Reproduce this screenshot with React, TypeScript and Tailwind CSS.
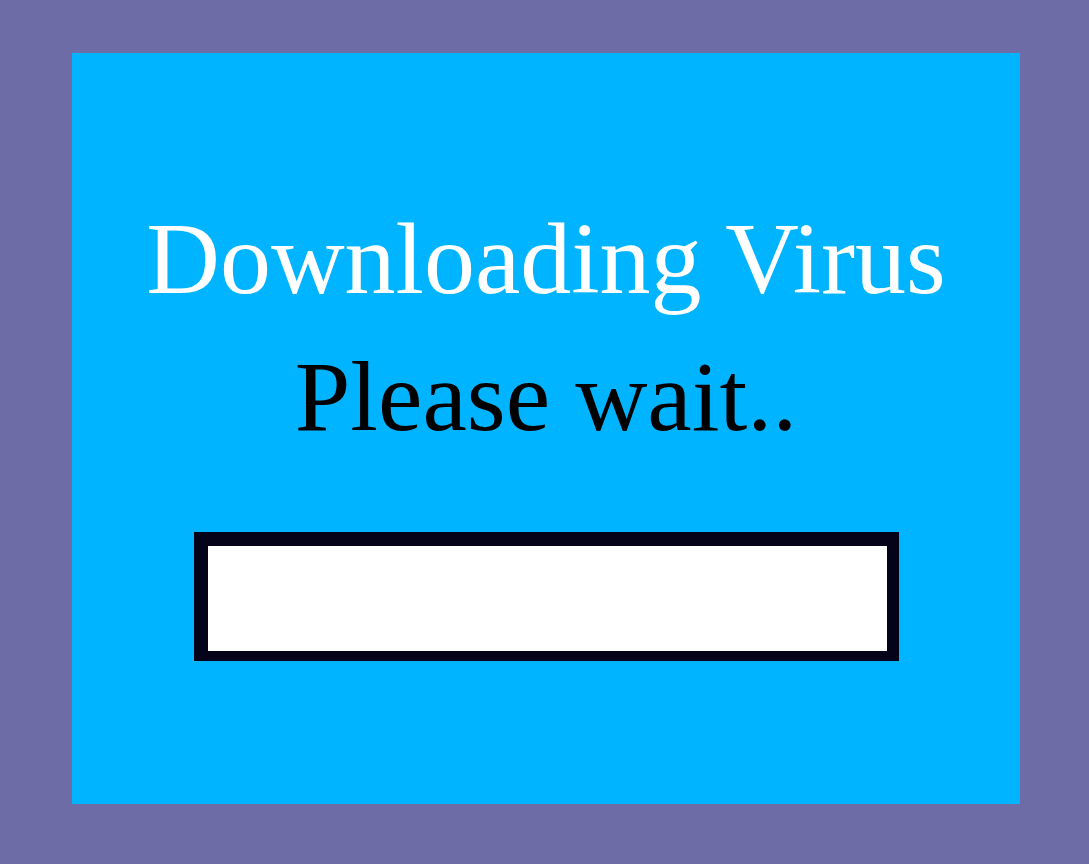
import React from "react";

export default function App() {
  return (
    <div className="min-h-[864px] w-full bg-[#6e6ca6] pt-[53px] pl-[72px]">
      <div className="w-[948px] h-[751px] bg-[#00b4ff] pt-[137px] flex flex-col items-center font-['Liberation_Serif',serif]">
        <h1 className="text-[102px] leading-[138px] text-white font-normal">Downloading Virus</h1>
        <p className="text-[100px] leading-[138px] text-black">Please wait..</p>
        <div className="mt-[66px] w-[705px] h-[129px] bg-white border-[#05031a] border-l-[14px] border-t-[14px] border-r-[12px] border-b-[10px]" />
      </div>
    </div>
  );
}
